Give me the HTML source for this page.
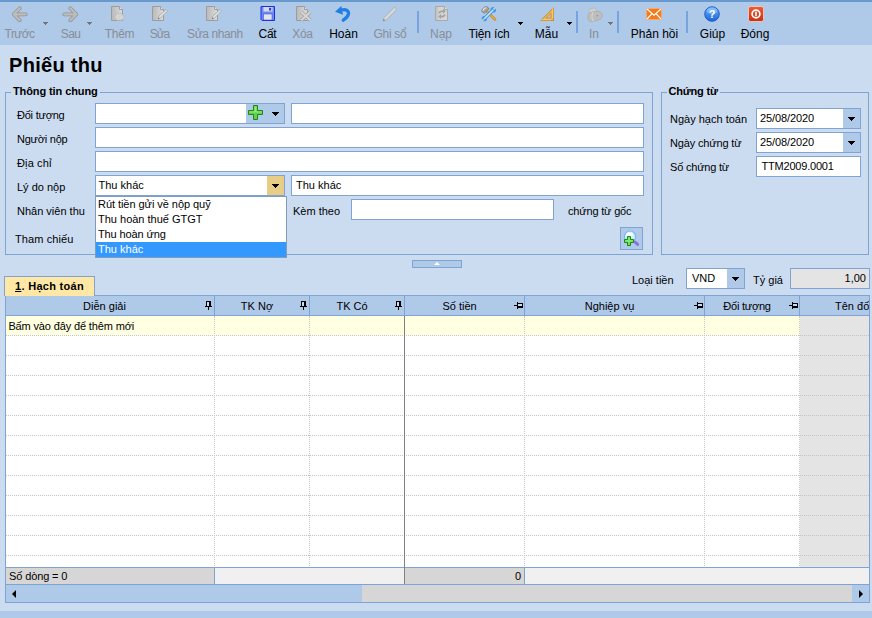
<!DOCTYPE html>
<html><head><meta charset="utf-8">
<style>
*{box-sizing:border-box;margin:0;padding:0}
html,body{width:872px;height:618px;overflow:hidden}
body{position:relative;background:#cbdcf1;font-family:"Liberation Sans",sans-serif;font-size:11px;color:#000}
.abs{position:absolute}
#topstrip{left:0;top:0;width:872px;height:2px;background:#6899cc}
#toolbar{left:0;top:2px;width:872px;height:43px;background:#afc9e9}
#botstrip{left:0;top:611px;width:872px;height:7px;background:#afc9e9}
.tb{position:absolute;top:25px;width:100px;margin-left:-50px;text-align:center;font-size:12px;line-height:14px;color:#000;white-space:nowrap}
.tb.dis{color:#898d94}
.ic{position:absolute;top:4px;width:16px;height:16px;margin-left:-8px}
.sep{position:absolute;top:9px;width:2px;height:22px;background:#77a3de}
.arr{position:absolute;width:7px;height:4px;--c:#000;background:linear-gradient(var(--c),var(--c)) 0 0/7px 1px no-repeat,linear-gradient(var(--c),var(--c)) 1px 1px/5px 1px no-repeat,linear-gradient(var(--c),var(--c)) 2px 2px/3px 1px no-repeat,linear-gradient(var(--c),var(--c)) 3px 3px/1px 1px no-repeat}
.arr.s{width:5px;height:3px;background:linear-gradient(var(--c),var(--c)) 0 0/5px 1px no-repeat,linear-gradient(var(--c),var(--c)) 1px 1px/3px 1px no-repeat,linear-gradient(var(--c),var(--c)) 2px 2px/1px 1px no-repeat}
.arr.g{--c:#757575}
#title{left:9px;top:53px;font-size:20px;font-weight:bold;line-height:24px;letter-spacing:0.3px;white-space:nowrap}
.fs{position:absolute;border:1px solid #7fa3d3}
.lg{position:absolute;top:-9px;left:5px;background:#cbdcf1;padding:0 2px;font-size:11px;font-weight:bold;line-height:14px;white-space:nowrap}
.lbl{position:absolute;font-size:11px;line-height:14px;white-space:nowrap}
.inp{position:absolute;height:21px;background:#fff;border:1px solid #7fa3d3;font-size:11px;line-height:18px;padding-left:3px;white-space:nowrap;overflow:hidden}
.ddb{position:absolute;background:#afc9e9}
#ddl{left:95px;top:196px;width:192px;height:62px;background:#fff;border:1px solid #7f9db9;font-size:11px}
#ddl div{height:15px;line-height:14px;padding-left:2px;white-space:nowrap}
#ddl div.sel{background:#3399ff;color:#fff}
/* grid */
#tab{z-index:2;left:4px;top:276px;width:91px;height:20px;background:#ffe8a6;border:1px solid #7fa3d3;border-bottom:none;font-weight:bold;font-size:11px;line-height:18px;padding-left:10px;letter-spacing:0.3px;white-space:nowrap}
#grid{left:5px;top:295px;width:865px;height:308px;border:1px solid #7fa3d3;background:#fff;overflow:hidden}
.hd{position:absolute;top:0;height:20px;padding-top:1px;background:#afc9e9;border-right:1px solid #7fa3d3;border-bottom:1px solid #7fa3d3;text-align:center;line-height:19px;font-size:11px;white-space:nowrap;overflow:hidden}
.hd span{display:block;margin-right:10px}
.pin{position:absolute}
.vl{position:absolute;top:20px;width:0;height:252px;border-left:1px dotted #c4c4c4}
.hl{position:absolute;left:0;width:864px;height:0;border-top:1px dotted #c4c4c4}
</style></head><body>
<div id="topstrip" class="abs"></div>
<div id="toolbar" class="abs">
<div class="tb dis" style="left:19.5px;letter-spacing:-0.6px">Trước</div>
<div class="tb dis" style="left:70.5px;letter-spacing:-0.7px">Sau</div>
<div class="tb dis" style="left:119.5px;letter-spacing:-0.35px">Thêm</div>
<div class="tb dis" style="left:159.5px;letter-spacing:-1.1px">Sửa</div>
<div class="tb dis" style="left:215px;letter-spacing:-0.4px">Sửa nhanh</div>
<div class="tb" style="left:267.5px;letter-spacing:-0.3px">Cất</div>
<div class="tb dis" style="left:302.5px;letter-spacing:-0.3px">Xóa</div>
<div class="tb" style="left:343.5px">Hoàn</div>
<div class="tb dis" style="left:390px;letter-spacing:-0.3px">Ghi sổ</div>
<div class="tb dis" style="left:441px">Nạp</div>
<div class="tb" style="left:489px;letter-spacing:-0.15px">Tiện ích</div>
<div class="tb" style="left:546.5px">Mẫu</div>
<div class="tb dis" style="left:594px">In</div>
<div class="tb" style="left:654.5px">Phản hồi</div>
<div class="tb" style="left:712.5px">Giúp</div>
<div class="tb" style="left:755px">Đóng</div>
<div class="sep" style="left:417px"></div>
<div class="sep" style="left:576px"></div>
<div class="sep" style="left:617px"></div>
<div class="sep" style="left:686px"></div>
<div class="arr s g" style="left:43px;top:20px"></div>
<div class="arr s g" style="left:87px;top:20px"></div>
<div class="arr s" style="left:518px;top:20px"></div>
<div class="arr s" style="left:567px;top:20px"></div>
<div class="arr s g" style="left:608px;top:20px"></div>

<svg width="0" height="0" style="position:absolute"><defs>
<linearGradient id="gd" x1="0" y1="0" x2="1" y2="0"><stop offset="0" stop-color="#b9b9b9"/><stop offset="1" stop-color="#dcdcdc"/></linearGradient>
<linearGradient id="gh" x1="0" y1="0" x2="0" y2="1"><stop offset="0" stop-color="#6db6ff"/><stop offset="1" stop-color="#1a63d6"/></linearGradient>
<linearGradient id="gr" x1="0" y1="0" x2="0" y2="1"><stop offset="0" stop-color="#e8603a"/><stop offset="1" stop-color="#c8300f"/></linearGradient>
</defs></svg>
<svg class="ic" style="left:19.5px" viewBox="-0.3 -0.9 17.2 17.2"><path d="M8 1.5L1.5 8L8 14.5M2 8H14.5" fill="none" stroke="#949494" stroke-width="4" stroke-linecap="round" stroke-linejoin="round"/><path d="M8 1.5L1.5 8L8 14.5M2 8H14.5" fill="none" stroke="#bdbdbd" stroke-width="2.4" stroke-linecap="round" stroke-linejoin="round"/></svg>
<svg class="ic" style="left:69.5px" viewBox="-0.9 -0.9 17.2 17.2"><path d="M8 1.5L14.5 8L8 14.5M14 8H1.5" fill="none" stroke="#949494" stroke-width="4" stroke-linecap="round" stroke-linejoin="round"/><path d="M8 1.5L14.5 8L8 14.5M14 8H1.5" fill="none" stroke="#bdbdbd" stroke-width="2.4" stroke-linecap="round" stroke-linejoin="round"/></svg>
<svg class="ic" style="left:119px" viewBox="0 0 16 16"><g transform="translate(0,0)"><path d="M.5 .5h8l3 3v11h-11z" fill="url(#gd)" stroke="#9c9c9c"/><path d="M8.5 .5v3h3" fill="#e8e8e8" stroke="#9c9c9c"/><path d="M3.600 10.700l1-1.200-.300-1.500 1.700.100 1-1.300 1.400.900 1.600-.700.600 1.400 1.800.100-.300 1.400 1.600.900-1.300 1 .300 1.500-1.800.200-.800 1.300-1.500-.700-1.500.900-.900-1.300-1.800.100.100-1.500z" fill="#d4d4d4" stroke="#b5b5b5" stroke-width=".6"/></g></svg>
<svg class="ic" style="left:160px" viewBox="0 0 16 16"><path d="M.5 .5h8l3 3v11h-11z" fill="url(#gd)" stroke="#9c9c9c"/><path d="M8.5 .5v3h3" fill="#e8e8e8" stroke="#9c9c9c"/><path d="M6 13l1-3 7-6.5 1.5 1.5-7 7z" fill="#e3e3e3" stroke="#a5a5a5" stroke-width=".8"/><path d="M6 13l.6-1.6 1 1z" fill="#666"/></svg>
<svg class="ic" style="left:214px" viewBox="0 0 16 16"><path d="M.5 .5h8l3 3v11h-11z" fill="url(#gd)" stroke="#9c9c9c"/><path d="M8.5 .5v3h3" fill="#e8e8e8" stroke="#9c9c9c"/><path d="M6 13l1-3 7-6.5 1.5 1.5-7 7z" fill="#e3e3e3" stroke="#a5a5a5" stroke-width=".8"/><path d="M6 13l.6-1.6 1 1z" fill="#666"/></svg>
<svg class="ic" style="left:268px" viewBox="0 0 16 16"><path d="M1 .5h13.5v14h-12.500l-1-1z" fill="#6f8af4" stroke="#1a2fe0"/><rect x="3.500" y="1" width="9" height="4.500" fill="#d9d9d9"/><rect x="9" y="1.800" width="2.200" height="2.700" fill="#2a45e8"/><rect x="3.500" y="8" width="8.500" height="6" fill="#e4e4e4" stroke="#2a45e8" stroke-width=".5"/></svg>
<svg class="ic" style="left:304px" viewBox="0 0 16 16"><path d="M.5 .5h8l3 3v11h-11z" fill="url(#gd)" stroke="#9c9c9c"/><path d="M8.5 .5v3h3" fill="#e8e8e8" stroke="#9c9c9c"/><path d="M5.300 6l9 8.300M14.300 6l-9 8.300" stroke="#a2a2a2" stroke-width="3.700" /><path d="M5.300 6l9 8.300M14.300 6l-9 8.300" stroke="#d6d6d6" stroke-width="2" /></svg>
<svg class="ic" style="left:343px" viewBox="0 0 16 16"><path d="M6.500 4C11.500 2.800 14.300 5.200 13.300 8.500C12.600 10.800 10.500 12.800 8.300 14.200" fill="none" stroke="#1f7fe4" stroke-width="3.300" stroke-linecap="round"/><path d="M0 5.800L6.300 0L8 8.800z" fill="#1f7fe4"/></svg>
<svg class="ic" style="left:390px" viewBox="0 0 16 16"><path d="M1 15l1.200-3.500L12.500 1.200 14.800 3.500 4.500 13.800z" fill="#d8d8d8" stroke="#a8a8a8" stroke-width=".8"/><path d="M1 15l.8-2 1.300 1.300z" fill="#777"/></svg>
<svg class="ic" style="left:441.500px" viewBox="0 0 16 16"><path d="M1.500 .5h9l3 3v11h-12z" fill="#d6d6d6" stroke="#a8a8a8"/><path d="M2 1h2.500v13h-2.500z" fill="#c6c6c6"/><path d="M10.500 .5v3h3" fill="#ececec" stroke="#a8a8a8"/><path d="M4.300 7.200C4.600 5.300 6 4.400 7.600 4.400H9V2.800l2.800 2.500L9 7.800V6.300H7.600C6.800 6.300 6.300 6.700 6.200 7.400zM11.700 8.600C11.400 10.500 10 11.400 8.400 11.400H7V13L4.200 10.500 7 8v1.500H8.400C9.200 9.500 9.700 9.100 9.800 8.400z" fill="#a3a3a3"/></svg>
<svg class="ic" style="left:488.500px" viewBox="0 0 16 16"><path d="M5 4.500L14 13.500" stroke="#cf8720" stroke-width="2.500" stroke-linecap="round"/><path d="M5 4.500L14 13.500" stroke="#f6c56e" stroke-width="1" stroke-linecap="round"/><path d="M.7 5.300C.9 3 3 .8 5.600 .5L8.200 2.700 3.400 7.200z" fill="#a6a6a6" stroke="#707070" stroke-width=".7"/><path d="M1.800 4.700C2.300 3 3.700 1.800 5.400 1.500" stroke="#ececec" stroke-width="1.100" fill="none"/><path d="M3.500 12.500L12 4" stroke="#3f97e8" stroke-width="3.400" stroke-linecap="round"/><circle cx="12.300" cy="3.700" r="2.800" fill="#3f97e8"/><circle cx="3.300" cy="12.700" r="2.600" fill="#3f97e8"/><path d="M3.800 12.200L11.800 4.200" stroke="#cfe8fd" stroke-width="1.500" stroke-linecap="round"/><path d="M12.500 3.500L16 0" stroke="#afc9e9" stroke-width="2.200"/><path d="M3.100 12.900L0 16" stroke="#afc9e9" stroke-width="2"/></svg>
<svg class="ic" style="left:547px" viewBox="0 0 16 16"><path d="M1.800 14.500L14.500 1.800v12.700z" fill="#edb650" stroke="#c78a2a" stroke-width="1"/><path d="M7.300 12l4.700-4.700v4.700z" fill="#afc9e9" stroke="#c78a2a" stroke-width=".8"/><path d="M3 13v1.500M5 13v1.500M7 13v1.500M9 13v1.500M11 13v1.500M13 3h1.500M13 5h1.500M13 7h1.500M13 9h1.500M13 11h1.500" stroke="#fbe3a8" stroke-width=".8"/></svg>
<svg class="ic" style="left:594.500px;top:5px" viewBox="0 0 16 16"><path d="M2.500 6.500l-.7-4.300 6.500-1.400 1.700 4.500z" fill="#d0d0d0" stroke="#b2b2b2" stroke-width=".7"/><path d="M.9 9c0-2.300 1.800-3.600 4.600-4l4.500-.8c3 0 5.300 1.600 5.300 4.300 0 2.400-1.300 3.800-3.800 4.400l-5.600 1.800c-2.800.5-5-.9-5-3.200z" fill="#bdbdbd" stroke="#a9a9a9" stroke-width=".7"/><path d="M6.300 5.500c-1.800 1.600-2 6 .3 8.800" fill="none" stroke="#d4d4d4" stroke-width="1.200"/><circle cx="10.300" cy="8.800" r=".8" fill="#8f8f8f"/></svg>
<svg class="ic" style="left:654px" viewBox="0 0 16 16"><rect x=".3" y="2.300" width="15.400" height="11.400" fill="#f27c1c" stroke="#f7b98a" stroke-width=".6"/><path d="M1 3l7 6.200L15 3M1 13l5-5.300M15 13l-5-5.300" fill="none" stroke="#fff" stroke-width="1.100"/></svg>
<svg class="ic" style="left:711.500px" viewBox="0 0 16 16"><circle cx="8" cy="8" r="7.300" fill="url(#gh)" stroke="#1b56c4" stroke-width=".9"/><ellipse cx="8" cy="4.800" rx="5.300" ry="3.200" fill="#a9d4ff" opacity=".45"/><text x="8" y="12" font-family="Liberation Sans, sans-serif" font-weight="bold" font-size="11" fill="#fff" text-anchor="middle">?</text></svg>
<svg class="ic" style="left:756px" viewBox="0 0 16 16"><rect x=".5" y=".5" width="15" height="15" rx="2" fill="url(#gr)" stroke="#f3c4b6" stroke-width="1"/><circle cx="8" cy="8" r="3.900" fill="none" stroke="#fff" stroke-width="1.700"/><path d="M8 5.800v4.400" stroke="#fff" stroke-width="1.600"/></svg>

</div>
<div id="title" class="abs">Phiếu thu</div>

<!-- Thong tin chung -->
<div class="fs" style="left:5px;top:92px;width:648px;height:163px"><div class="lg" style="letter-spacing:-0.1px">Thông tin chung</div></div>
<div class="lbl" style="left:17px;top:108px;letter-spacing:-0.22px">Đối tượng</div>
<div class="lbl" style="left:17px;top:132px;letter-spacing:-0.22px">Người nộp</div>
<div class="lbl" style="left:17px;top:156px;letter-spacing:0.12px">Địa chỉ</div>
<div class="lbl" style="left:17px;top:180px">Lý do nộp</div>
<div class="lbl" style="left:17px;top:204px">Nhân viên thu</div>
<div class="lbl" style="left:15px;top:232px;letter-spacing:0.1px">Tham chiếu</div>

<div class="inp" style="left:95px;top:103px;width:190px"></div>
<div class="ddb" style="left:246px;top:104px;width:38px;height:19px"></div>
<svg class="abs" style="left:248px;top:105px" width="15" height="15" viewBox="0 0 15 15"><path d="M5.5 .5h4v5h5v4h-5v5h-4v-5h-5v-4h5z" fill="#5fd04a" stroke="#1f8a12" stroke-width="1"/><path d="M6.5 1.5h2v5h5v1h-12v-1h5z" fill="#a6ee8f" opacity=".8"/></svg>
<div class="arr" style="left:272px;top:112px"></div>
<div class="inp" style="left:291px;top:103px;width:353px"></div>
<div class="inp" style="left:95px;top:127px;width:549px"></div>
<div class="inp" style="left:95px;top:151px;width:549px"></div>
<div class="inp" style="left:95px;top:175px;width:190px;padding-left:2.500px">Thu khác</div>
<div class="ddb" style="left:267px;top:176px;width:17px;height:19px;background:#e8cd85"></div>
<div class="arr" style="left:272px;top:184px"></div>
<div class="inp" style="left:291px;top:175px;width:353px;padding-left:4px">Thu khác</div>
<div class="lbl" style="left:293px;top:204px">Kèm theo</div>
<div class="inp" style="left:351px;top:199px;width:203px"></div>
<div class="lbl" style="left:568px;top:204px;letter-spacing:-0.18px">chứng từ gốc</div>
<div class="abs" style="left:620px;top:227px;width:23px;height:23px;background:#afc9e9;border:1px solid #7fa3d3"></div>
<svg class="abs" style="left:620px;top:227px" width="23" height="23" viewBox="0 0 23 23"><path d="M15 15L17.600 17.400" stroke="#8a72dc" stroke-width="3" stroke-linecap="round"/><circle cx="10" cy="9.600" r="5.600" fill="#d3eafb" stroke="#72b6f0" stroke-width="1.100"/><ellipse cx="9.500" cy="7.500" rx="3.500" ry="2.300" fill="#f4fbff"/><path d="M7.500 9.500h3v3h3v3h-3v3h-3v-3h-3v-3h3z" fill="#6fdc5a" stroke="#188a10" stroke-width="1"/><path d="M8.500 10.500h1v3h3v1h-7v-1h3z" fill="#b4f3a2" opacity=".7"/></svg>
<div id="ddl" class="abs"><div style="letter-spacing:-0.05px">Rút tiền gửi về nộp quỹ</div><div>Thu hoàn thuế GTGT</div><div style="letter-spacing:-0.12px">Thu hoàn ứng</div><div class="sel">Thu khác</div></div>

<!-- Chung tu -->
<div class="fs" style="left:661px;top:92px;width:208px;height:163px"><div class="lg" style="letter-spacing:-0.2px;left:4.500px">Chứng từ</div></div>
<div class="lbl" style="left:670px;top:112px">Ngày hạch toán</div>
<div class="lbl" style="left:670px;top:136px;letter-spacing:-0.15px">Ngày chứng từ</div>
<div class="lbl" style="left:670px;top:160px;letter-spacing:-0.2px">Số chứng từ</div>
<div class="inp" style="left:756px;top:108px;width:105px;letter-spacing:-0.1px">25/08/2020</div>
<div class="ddb" style="left:843px;top:109px;width:17px;height:19px"></div>
<div class="arr" style="left:848px;top:117px"></div>
<div class="inp" style="left:756px;top:132px;width:105px;letter-spacing:-0.1px">25/08/2020</div>
<div class="ddb" style="left:843px;top:133px;width:17px;height:19px"></div>
<div class="arr" style="left:848px;top:141px"></div>
<div class="inp" style="left:756px;top:156px;width:105px;padding-left:4.500px;letter-spacing:-0.2px">TTM2009.0001</div>

<!-- collapse btn -->
<div class="abs" style="left:412px;top:260px;width:50px;height:8px;background:#afc9e9;border:1px solid #7fa3d3"></div>
<div class="abs" style="left:434px;top:262px;width:0;height:0;border-left:3px solid transparent;border-right:3px solid transparent;border-bottom:3px solid #fff"></div>

<!-- currency -->
<div class="lbl" style="left:632px;top:273px">Loại tiền</div>
<div class="inp" style="left:686px;top:268px;width:59px;padding-left:5px">VND</div>
<div class="ddb" style="left:727px;top:269px;width:17px;height:19px"></div>
<div class="arr" style="left:732px;top:277px"></div>
<div class="lbl" style="left:753px;top:273px">Tỷ giá</div>
<div class="inp" style="left:790px;top:268px;width:80px;background:#e4e4e4;text-align:right;padding-right:3px">1,00</div>

<!-- grid -->
<div id="tab" class="abs"><u>1</u>. Hạch toán</div>
<div id="grid" class="abs"><div class="abs" style="left:-1px;top:0;width:865px;height:306px">
 <div class="abs" style="left:0;top:20px;width:795px;height:19px;background:#ffffe1"></div>
 <div class="abs" style="left:795px;top:20px;width:70px;height:252px;background:#e4e4e4"></div>
 <div class="hd" style="left:0;width:210px"><span>Diễn giải</span><svg class="pin" style="right:2px;top:5px;width:7px;height:9px" viewBox="0 0 7 9" shape-rendering="crispEdges"><path d="M1 0h5v5h-2v-4h-2v4h-1zM0 5h7v1h-7zM3 6h1v3h-1z" fill="#000"/><rect x="2" y="1" width="2" height="4" fill="#c9dcf5"/></svg></div>
 <div class="hd" style="left:210px;width:95px"><span>TK Nợ</span><svg class="pin" style="right:2px;top:5px;width:7px;height:9px" viewBox="0 0 7 9" shape-rendering="crispEdges"><path d="M1 0h5v5h-2v-4h-2v4h-1zM0 5h7v1h-7zM3 6h1v3h-1z" fill="#000"/><rect x="2" y="1" width="2" height="4" fill="#c9dcf5"/></svg></div>
 <div class="hd" style="left:305px;width:95px"><span>TK Có</span><svg class="pin" style="right:2px;top:5px;width:7px;height:9px" viewBox="0 0 7 9" shape-rendering="crispEdges"><path d="M1 0h5v5h-2v-4h-2v4h-1zM0 5h7v1h-7zM3 6h1v3h-1z" fill="#000"/><rect x="2" y="1" width="2" height="4" fill="#c9dcf5"/></svg></div>
 <div class="hd" style="left:400px;width:120px"><span>Số tiền</span><svg class="pin" style="right:1px;top:6px;width:9px;height:7px" viewBox="0 0 9 7" shape-rendering="crispEdges"><path d="M0 3h3v1h-3zM3 0h1v7h-1zM4 1h5v5h-5v-2h4v-2h-4z" fill="#000"/><rect x="4" y="2" width="4" height="2" fill="#c9dcf5"/></svg></div>
 <div class="hd" style="left:520px;width:180px"><span>Nghiệp vụ</span><svg class="pin" style="right:1px;top:6px;width:9px;height:7px" viewBox="0 0 9 7" shape-rendering="crispEdges"><path d="M0 3h3v1h-3zM3 0h1v7h-1zM4 1h5v5h-5v-2h4v-2h-4z" fill="#000"/><rect x="4" y="2" width="4" height="2" fill="#c9dcf5"/></svg></div>
 <div class="hd" style="left:700px;width:95px"><span style="letter-spacing:-0.22px">Đối tượng</span><svg class="pin" style="right:1px;top:6px;width:9px;height:7px" viewBox="0 0 9 7" shape-rendering="crispEdges"><path d="M0 3h3v1h-3zM3 0h1v7h-1zM4 1h5v5h-5v-2h4v-2h-4z" fill="#000"/><rect x="4" y="2" width="4" height="2" fill="#c9dcf5"/></svg></div>
 <div class="hd" style="left:795px;width:80px;text-align:left;border-right:none"><span style="margin-left:35px">Tên đối tượng</span></div>
 <div class="abs" style="left:3.400px;top:21px;line-height:19px;letter-spacing:-0.14px;white-space:nowrap">Bấm vào đây để thêm mới</div>
 <div class="vl" style="left:209px"></div>
<div class="vl" style="left:304px"></div>
<div class="vl" style="left:519px"></div>
<div class="vl" style="left:699px"></div>
<div class="vl" style="left:794px"></div>
<div class="hl" style="top:39px"></div>
<div class="hl" style="top:59px"></div>
<div class="hl" style="top:79px"></div>
<div class="hl" style="top:99px"></div>
<div class="hl" style="top:119px"></div>
<div class="hl" style="top:139px"></div>
<div class="hl" style="top:159px"></div>
<div class="hl" style="top:179px"></div>
<div class="hl" style="top:199px"></div>
<div class="hl" style="top:219px"></div>
<div class="hl" style="top:239px"></div>
<div class="hl" style="top:259px"></div>

 <div class="abs" style="left:0;top:271px;width:864px;height:18px;background:#f0f0f0;border-top:1px solid #7fa3d3;border-bottom:1px solid #7fa3d3"></div>
 <div class="abs" style="left:0;top:272px;width:210px;height:16px;background:#d6d6d6;border-right:1px solid #7fa3d3;line-height:17px;padding-left:4px;letter-spacing:-0.12px;white-space:nowrap">Số dòng = 0</div>
 <div class="abs" style="left:400px;top:272px;width:120px;height:16px;background:#d6d6d6;border-right:1px solid #7fa3d3;line-height:17px;text-align:right;padding-right:3px">0</div>
 <div class="abs" style="left:399px;top:20px;width:1px;height:268px;background:#808080"></div>
 <div class="abs" style="left:0;top:289px;width:864px;height:17px;background:#d6d6d6"></div>
 <div class="abs" style="left:0;top:289px;width:357px;height:17px;background:#afc9e9"></div>
 <div class="abs" style="left:847px;top:289px;width:17px;height:17px;background:#afc9e9"></div>
 <div class="abs" style="left:7px;top:294px;width:0;height:0;border-top:4px solid transparent;border-bottom:4px solid transparent;border-right:4px solid #000"></div>
 <div class="abs" style="left:854px;top:294px;width:0;height:0;border-top:4px solid transparent;border-bottom:4px solid transparent;border-left:4px solid #000"></div>
</div></div>
<div id="botstrip" class="abs"></div>
</body></html>
